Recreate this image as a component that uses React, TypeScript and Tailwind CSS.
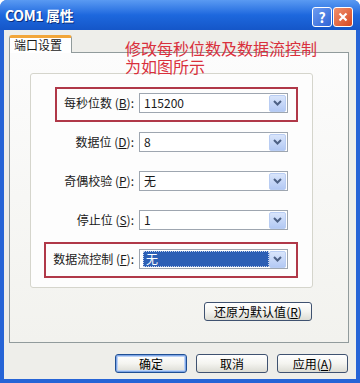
import React from "react";

const font = { fontFamily: '"Noto Sans CJK SC", "Noto Sans", sans-serif' };

function Acc({ k }: { k: string }) {
  return (
    <span>
      {" ("}
      <span className="underline underline-offset-1">{k}</span>
      {")"}
    </span>
  );
}

function DropButton() {
  return (
    <div className="flex h-[17px] w-[17px] items-center justify-center rounded-[2px] border border-[#b9cdf3] bg-gradient-to-b from-[#d9e5fb] to-[#b3c9f4]">
      <svg width="9" height="6" viewBox="0 0 9 6">
        <path d="M1 1 L4.5 4.5 L8 1" fill="none" stroke="#4d6185" strokeWidth="2" />
      </svg>
    </div>
  );
}

function Combo({ value, active }: { value: string; active?: boolean }) {
  return (
    <div className="flex h-[20px] w-[149px] items-center border border-[#9ea6b0] bg-white pl-[1px] pr-[1px]">
      <div className="flex h-[16px] flex-1 items-center pl-[2px]">
        {active ? (
          <div className="flex h-full w-full items-center border border-dotted border-[#c8d4ec] bg-[#2d5fb5] pl-[2px] text-white">
            {value}
          </div>
        ) : (
          <span className="pl-[1px]">{value}</span>
        )}
      </div>
      <DropButton />
    </div>
  );
}

function Row({ label, k, value, active }: { label: string; k: string; value: string; active?: boolean }) {
  return (
    <div className="flex h-[20px] items-center">
      <div className="w-[104px] pr-[1px] text-right">
        {label}
        <Acc k={k} />:
      </div>
      <div className="ml-[4px]">
        <Combo value={value} active={active} />
      </div>
    </div>
  );
}

function XpButton({ children, primary, w }: { children: React.ReactNode; primary?: boolean; w: string }) {
  return (
    <div
      className={`flex h-[19px] ${w} items-center justify-center rounded-[3px] border ${
        primary ? "border-[#1f4f94] shadow-[inset_0_0_0_1px_#7fa6e6,inset_0_0_0_2px_#bcd2f5]" : "border-[#3f5270]"
      } bg-gradient-to-b from-[#ffffff] via-[#f4f4f0] to-[#dcdcd4] text-[12px] text-black`}
    >
      {children}
    </div>
  );
}

export default function App() {
  return (
    <div className="relative h-[383px] w-[360px] overflow-hidden bg-white text-[12px] text-[#1a1a1a]" style={font}>
      <div className="flex h-full w-full flex-col rounded-t-[7px] bg-[#2664d6]">
        {/* title bar */}
        <div className="flex h-[30px] items-center rounded-t-[7px] bg-gradient-to-b from-[#5a9af2] via-[#1d68de] to-[#1556c8] pl-[5px] pr-[7px]">
          <span className="text-[14px] font-bold tracking-tight text-white [text-shadow:1px_1px_0_#0a2f80]">COM1 属性</span>
          <div className="ml-auto flex gap-[1px] pt-[4px]">
            <div className="flex h-[20px] w-[20px] items-center justify-center rounded-[3px] border border-white bg-gradient-to-br from-[#6e9cf0] to-[#2f63d6] text-[14px] font-bold text-white">
              ?
            </div>
            <div className="flex h-[20px] w-[20px] items-center justify-center rounded-[3px] border border-white bg-gradient-to-br from-[#f0906c] to-[#d6461e]">
              <svg width="10" height="10" viewBox="0 0 10 10">
                <path d="M1.5 1.5 L8.5 8.5 M8.5 1.5 L1.5 8.5" stroke="white" strokeWidth="2.2" />
              </svg>
            </div>
          </div>
        </div>

        {/* body */}
        <div className="mx-[4px] mb-[4px] flex flex-1 flex-col bg-[#eeeeea] pl-[5px] pr-[7px] pt-[5px]">
          <div className="flex">
            <div className="relative z-10 flex h-[18px] w-[63px] items-center rounded-t-[3px] border-x border-t-[3px] border-x-[#919b9c] border-t-[#f2a63a] bg-white pl-[4px] pb-[1px]">
              端口设置
            </div>
          </div>
          <div className="-mt-[1px] flex h-[291px] flex-col border border-[#919b9c] bg-gradient-to-b from-[#fcfcfc] to-[#f2f2ee] pl-[20px] pt-[20px]">
            <div className="flex h-[215px] w-[283px] flex-col gap-[19px] rounded-[3px] border border-[#d5d5cc] bg-[#fdfdfd] pt-[19px]">
              <Row label="每秒位数" k="B" value="115200" />
              <Row label="数据位" k="D" value="8" />
              <Row label="奇偶校验" k="P" value="无" />
              <Row label="停止位" k="S" value="1" />
              <Row label="数据流控制" k="F" value="无" active />
            </div>
            <div className="mt-[14px] flex pl-[174px]">
              <XpButton w="w-[108px]">
                还原为默认值<Acc k="R" />
              </XpButton>
            </div>
          </div>
          <div className="mt-[11px] flex justify-end gap-[9px] pr-[1px]">
            <XpButton primary w="w-[72px]">
              确定
            </XpButton>
            <XpButton w="w-[72px]">取消</XpButton>
            <XpButton w="w-[71px]">
              应用<Acc k="A" />
            </XpButton>
          </div>
        </div>
      </div>

      {/* annotation overlay */}
      <div className="absolute left-[125px] top-[39px] w-[200px] text-[16px] leading-[18px] text-[#d9303c]">
        修改每秒位数及数据流控制
        <br />
        为如图所示
      </div>
      <div className="absolute left-[55px] top-[87px] h-[35px] w-[243px] border-2 border-[#b03848]" />
      <div className="absolute left-[44px] top-[242px] h-[36px] w-[254px] border-2 border-[#b03848]" />
    </div>
  );
}
